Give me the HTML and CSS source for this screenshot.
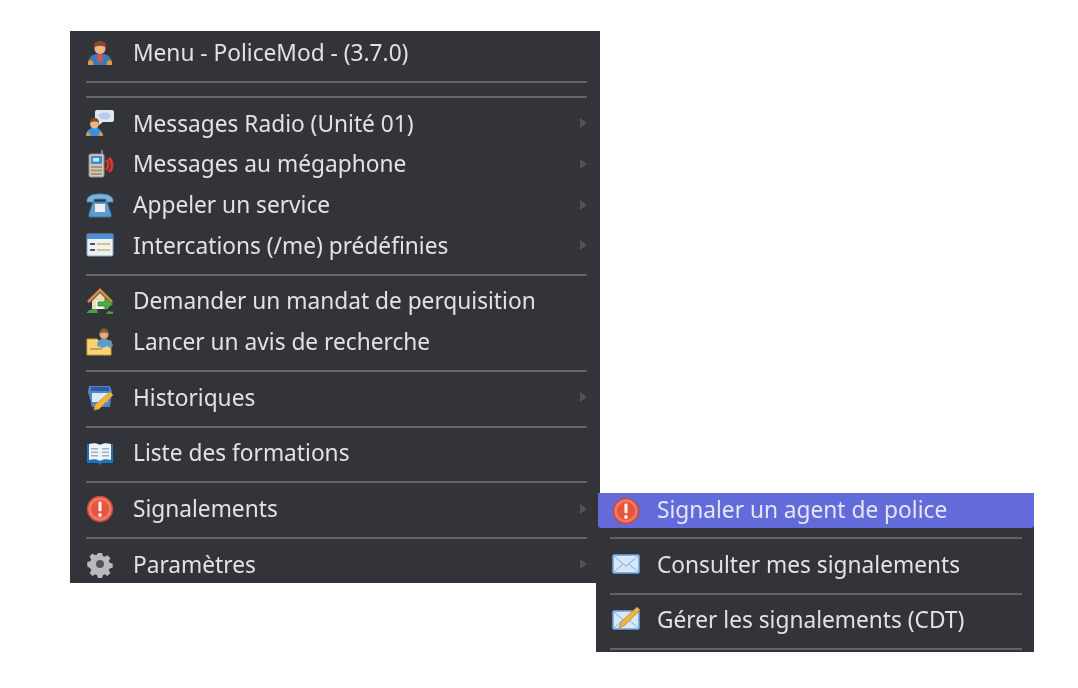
FILE: index.html
```html
<!DOCTYPE html>
<html lang="fr">
<head>
<meta charset="utf-8">
<title>Menu PoliceMod</title>
<link rel="stylesheet" href="styles.css">
</head>
<body>
<svg class="defs" width="0" height="0" aria-hidden="true">
  <defs>
    <symbol id="i-alert" viewBox="0 0 28 28">
      <circle cx="14" cy="14" r="12.500" fill="#ee7a62" stroke="#c9473a" stroke-width="1.500"/>
      <circle cx="14" cy="14" r="9" fill="#e4543f"/>
      <rect x="12.400" y="6.500" width="3.200" height="10" rx="1.400" fill="#fdf0ea"/>
      <circle cx="14" cy="20" r="1.900" fill="#fdf0ea"/>
    </symbol>
    <symbol id="i-mail" viewBox="0 0 28 28">
      <rect x="1" y="5" width="26" height="18" rx="1" fill="#d8e8f8" stroke="#6fa3d6" stroke-width="1.600"/>
      <path d="M2 6l12 10L26 6M2 22l9-8M26 22l-9-8" fill="none" stroke="#9cc4ea" stroke-width="1.400"/>
    </symbol>
  </defs>
</svg>
<div class="stage">
  <nav class="menu">
    <div class="row">
      <svg class="ico" viewBox="0 0 28 28">
        <path d="M2 26c0-7 3-10 8-11h8c5 1 8 4 8 11z" fill="#3d78b8"/>
        <path d="M2 26c0-2 0-4 1-5l4 1v4zM26 26c0-2 0-4-1-5l-4 1v4z" fill="#e09a3c"/>
        <path d="M12 15h4l1 6-3 3-3-3z" fill="#d8574a"/>
        <circle cx="14" cy="9.500" r="5.500" fill="#e8b58c"/>
        <path d="M8 9c-1-6 3-7 6-7s7 1 6 7c-2-3-9-3-12 0z" fill="#8a4a26"/>
      </svg>
      <span class="label">Menu - PoliceMod - (3.7.0)</span>
    </div>
    <div class="sep"></div>
    <div class="sep"></div>
    <div class="row">
      <svg class="ico" viewBox="0 0 28 28">
        <path d="M11 1h15a2 2 0 0 1 2 2v8a2 2 0 0 1-2 2h-9l-4 3v-3h-2a2 2 0 0 1-2-2V3a2 2 0 0 1 2-2z" fill="#dfe8f2"/>
        <ellipse cx="18.500" cy="7" rx="6" ry="3.500" fill="#b3cce8"/>
        <path d="M0 27c0-5 3-7 6-8h5c3 1 5 3 6 8z" fill="#3f8fe0"/>
        <path d="M0 27l1-4 3 1v3zM17 27l-1-4-3 1v3z" fill="#e59a3a"/>
        <circle cx="8.500" cy="15" r="4.500" fill="#e8b58c"/>
        <path d="M4 14c0-4 2-5 4.500-5s4.500 1 4.500 5c-2-2-7-2-9 0z" fill="#8a4a26"/>
      </svg>
      <span class="label">Messages Radio (Unité 01)</span>
      <i class="arrow"></i>
    </div>
    <div class="row">
      <svg class="ico" viewBox="0 0 28 28">
        <path d="M16 0v5" stroke="#9aa0a6" stroke-width="1.500"/>
        <rect x="3" y="4" width="15" height="23" rx="1.500" fill="#d9c7a8" stroke="#8b8f94"/>
        <rect x="5" y="6" width="11" height="8" fill="#3a8fd8"/>
        <rect x="7" y="8" width="6" height="3.500" fill="#cfe6f8"/>
        <path d="M5 16h11v2H5zM5 19.500h11v2H5zM5 23h11v2H5z" fill="#9c9a86"/>
        <path d="M20 10c3 2 3 7 0 10M23 8c4 3 4 11 0 14" fill="none" stroke="#d8352f" stroke-width="2.800"/>
      </svg>
      <span class="label">Messages au mégaphone</span>
      <i class="arrow"></i>
    </div>
    <div class="row">
      <svg class="ico" viewBox="0 0 28 28">
        <path d="M1 10c0-5 5-7 13-7s13 2 13 7v1h-7V8H8v3H1z" fill="#7fb2dc" stroke="#4f86b8"/>
        <path d="M7 11h14l4 12v3H3v-3z" fill="#5f9bcd" stroke="#3f76a8"/>
        <rect x="9" y="13" width="10" height="8" fill="#e9f0f6"/>
      </svg>
      <span class="label">Appeler un service</span>
      <i class="arrow"></i>
    </div>
    <div class="row">
      <svg class="ico" viewBox="0 0 28 28">
        <rect x="1" y="3" width="26" height="22" rx="1" fill="#eef2f6" stroke="#7fa5cc"/>
        <rect x="1" y="3" width="26" height="5" fill="#4f8fd8"/>
        <path d="M4 12h5v2H4zM4 18h5v2H4z" fill="#4a5563"/>
        <path d="M11 12h13v2H11zM11 18h13v2H11z" fill="#d9c28c"/>
      </svg>
      <span class="label">Intercations (/me) prédéfinies</span>
      <i class="arrow"></i>
    </div>
    <div class="sep"></div>
    <div class="row">
      <svg class="ico" viewBox="0 0 28 28">
        <path d="M14 1L1 14l2 2 11-11 11 11 2-2z" fill="#d98a3d"/>
        <path d="M6 14l8-8 8 8v8H6z" fill="#eddcb8"/>
        <rect x="10" y="14" width="7" height="8" fill="#f4f6f4"/>
        <path d="M1 25c3-3 6-3 10-3l1 4H1zM22 24l5 1v2h-7z" fill="#49a03c"/>
        <path d="M12 15h7v-4l8 6-8 6v-4h-7z" fill="#4cae48" stroke="#2e7e30" stroke-width=".8"/>
      </svg>
      <span class="label">Demander un mandat de perquisition</span>
    </div>
    <div class="row">
      <svg class="ico" viewBox="0 0 28 28">
        <path d="M1 11h10l2 2h12v14H1z" fill="#f5d47a" stroke="#d89a2e"/>
        <path d="M4 20h12v2H4z" fill="#c8a04e"/>
        <path d="M11 18c0-5 3-7 5-7h4c4 1 6 4 7 7l-3 2-3-2-4 2z" fill="#5c9ccc"/>
        <circle cx="18" cy="6.500" r="4.500" fill="#e0aa86"/>
        <path d="M13.500 6c0-4 2-5.500 4.500-5.500S22.500 2 22.500 6c-2-2-7-2-9 0z" fill="#8a5a32"/>
      </svg>
      <span class="label">Lancer un avis de recherche</span>
    </div>
    <div class="sep"></div>
    <div class="row">
      <svg class="ico" viewBox="0 0 28 28">
        <path d="M3 3h21l2 6-2 15H6L2 9z" fill="#4f86cc"/>
        <path d="M5 4h18v4H5z" fill="#2f5c9c"/>
        <path d="M6 10h16v9H6z" fill="#dfe9f5"/>
        <path d="M24 9l3 3-14 14-5 1 1-5z" fill="#f0b63c" stroke="#d08a22" stroke-width=".8"/>
      </svg>
      <span class="label">Historiques</span>
      <i class="arrow"></i>
    </div>
    <div class="sep"></div>
    <div class="row">
      <svg class="ico" viewBox="0 0 28 28">
        <path d="M1 5h26v19H16l-2 2-2-2H1z" fill="#1f73b8"/>
        <path d="M3 5c4-1 8-1 11 1 3-2 7-2 11-1v16c-4-1-8-1-11 1-3-2-7-2-11-1z" fill="#eef3f6"/>
        <path d="M5 9h7v1.500H5zM5 12.500h7V14H5zM5 16h7v1.500H5zM16 9h7v1.500h-7zM16 12.500h7V14h-7zM16 16h7v1.500h-7z" fill="#9db4c4"/>
      </svg>
      <span class="label">Liste des formations</span>
    </div>
    <div class="sep"></div>
    <div class="row">
      <svg class="ico"><use href="#i-alert"/></svg>
      <span class="label">Signalements</span>
      <i class="arrow"></i>
    </div>
    <div class="sep"></div>
    <div class="row">
      <svg class="ico" viewBox="0 0 28 28">
        <path d="M11.500 1h5l.8 3.600 2.400 1 3.100-2 3.500 3.500-2 3.100 1 2.400 3.600.8v5l-3.600.8-1 2.400 2 3.100-3.500 3.500-3.100-2-2.400 1-.8 3.600h-5l-.8-3.600-2.400-1-3.100 2-3.500-3.500 2-3.100-1-2.400L-1 16.500v-5l3.600-.8 1-2.400-2-3.100 3.500-3.500 3.100 2 2.400-1z" transform="translate(2.100 2.100) scale(.85)" fill="#b9babc"/>
        <circle cx="14" cy="14" r="4" fill="#55565b"/>
      </svg>
      <span class="label">Paramètres</span>
      <i class="arrow"></i>
    </div>
  </nav>
  <nav class="submenu">
    <div class="row row-active">
      <svg class="ico"><use href="#i-alert"/></svg>
      <span class="label">Signaler un agent de police</span>
    </div>
    <div class="sep"></div>
    <div class="row">
      <svg class="ico"><use href="#i-mail"/></svg>
      <span class="label">Consulter mes signalements</span>
    </div>
    <div class="sep"></div>
    <div class="row">
      <svg class="ico" viewBox="0 0 28 28">
        <use href="#i-mail" width="28" height="28"/>
        <path d="M25 1l3 3-15 15-6 3 2-6z" fill="#f0b63c" stroke="#b9822a" stroke-width=".8"/>
      </svg>
      <span class="label">Gérer les signalements (CDT)</span>
    </div>
    <div class="sep"></div>
  </nav>
</div>
</body>
</html>
```
FILE: styles.css
```css
* { box-sizing: border-box; }
html, body { margin: 0; height: 100%; background: #fff; overflow: hidden; }
.defs { position: absolute; }
.stage {
  position: relative;
  padding: 31px 0 0 70px;
  font-family: "Noto Sans", "Open Sans", sans-serif;
  font-size: 22.7px;
  color: #e2e2e2;
}
.menu {
  display: flex;
  flex-direction: column;
  width: 530px;
  height: 552px;
  padding: 1.3px 13px 0 16px;
  background: #33343a;
  overflow: hidden;
  filter: blur(.6px);
}
.submenu {
  display: flex;
  flex-direction: column;
  position: absolute;
  left: 596px;
  top: 493px;
  width: 438px;
  height: 159px;
  padding-left: 14px;
  padding-right: 12px;
  background: #33343a;
  overflow: hidden;
  filter: blur(.6px);
}
.row {
  flex: none;
  display: flex;
  align-items: center;
  height: 40.67px;
}
.ico {
  flex: none;
  width: 28px;
  height: 28px;
  margin-right: 19px;
}
.label { flex: 1; white-space: nowrap; }
.arrow {
  flex: none;
  width: 0;
  height: 0;
  border-left: 7px solid #50525a;
  border-top: 5px solid transparent;
  border-bottom: 5px solid transparent;
}
.sep {
  flex: none;
  height: 2px;
  margin: 8px 0 5px;
  background: #63646a;
}
.submenu .row { margin-left: 2px; }
.submenu .ico { margin-right: 17px; }
.submenu .row-active {
  height: 35px;
  margin: 0 -12px 0 -12px;
  padding-left: 14px;
  background: #636bdb;
  border-radius: 0 0 3px 3px;
  color: #e4e6f8;
}
.row-active .label { position: relative; top: -1px; }
.row-active + .sep { margin-top: 9px; }
```
